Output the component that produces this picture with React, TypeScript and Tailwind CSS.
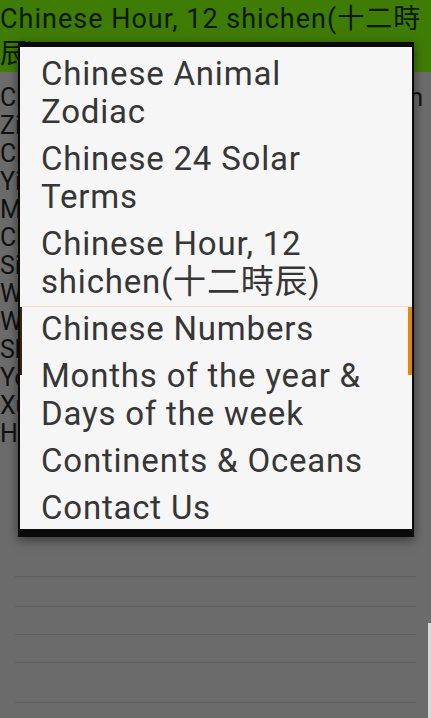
import * as React from "react";

const menuItems = [
  "Chinese Animal Zodiac",
  "Chinese 24 Solar Terms",
  "Chinese Hour, 12 shichen(十二時辰)",
  "Chinese Numbers",
  "Months of the year & Days of the week",
  "Continents & Oceans",
  "Contact Us",
];

const shichen = [
  "Zi 子 23:00 - 01:00",
  "Chou 丑 01:00 - 03:00",
  "Yin 寅 03:00 - 05:00",
  "Mao 卯 05:00 - 07:00",
  "Chen 辰 07:00 - 09:00",
  "Si 巳 09:00 - 11:00",
  "Wu 午 11:00 - 13:00",
  "Wei 未 13:00 - 15:00",
  "Shen 申 15:00 - 17:00",
  "You 酉 17:00 - 19:00",
  "Xu 戌 19:00 - 21:00",
  "Hai 亥 21:00 - 23:00",
];

// divider rows of the list under the text, heights in px
const dividerRows = ["h-[30px]", "h-[28px]", "h-[28px]", "h-[40px]"];

const font = { fontFamily: "Roboto, 'Noto Sans CJK TC', sans-serif" };

export default function App() {
  return (
    <div className="relative w-[431px] h-[718px] overflow-hidden bg-[#6b6b6b]" style={font}>
      {/* page behind the dimmed menu */}
      <div className="bg-[#3e7c06] h-[72px] pt-[2px] text-[27px] leading-[35px] tracking-[1px] text-[#0c1800]">
        Chinese Hour, 12 shichen(十二時辰)
      </div>

      <div className="pt-[12px] text-[25px] leading-[28px] text-[#111]">
        <div className="flex justify-between pr-[8px]">
          <span>Chinese Hour</span>
          <span>Time Span</span>
        </div>
        {shichen.map((row) => (
          <div key={row} className="whitespace-nowrap">
            {row}
          </div>
        ))}
      </div>

      <div className="mt-[128px] mx-[15px]">
        {dividerRows.map((h, i) => (
          <div key={i} className={`${h} border-t border-[#5e5e5e]`} />
        ))}
        <div className="border-t border-[#5e5e5e]" />
      </div>

      {/* page scroll indicator */}
      <div className="absolute right-0 top-[623px] w-[3px] h-[95px] bg-[#d9d9d9]" />

      {/* overflow menu */}
      <div className="absolute left-[18px] top-[42px] w-[396px] bg-[#0a0a0a] pt-[5px] pb-[8px] px-[2px] shadow-[0_3px_10px_rgba(0,0,0,0.5)]">
        <div className="relative h-[482px] overflow-hidden bg-[#f6f6f6] pt-[3.5px]">
          {menuItems.map((label, i) => (
            <div
              key={label}
              className={
                i === 3
                  ? "border-t border-[#f2dcc6] pl-[21px] pr-[21px] pt-[3.5px] pb-[4.5px] text-[33px] leading-[38px] tracking-[0.8px] text-[#363636]"
                  : "pl-[21px] pr-[21px] py-[4.5px] text-[33px] leading-[38px] tracking-[0.8px] text-[#363636]"
              }
            >
              {label}
            </div>
          ))}
          <div className="absolute left-0 top-[260px] w-[2px] h-[68px] bg-[#3b2411]" />
          <div className="absolute right-0 top-[260px] w-[4px] h-[68px] bg-[#e0880f]" />
        </div>
      </div>
    </div>
  );
}
